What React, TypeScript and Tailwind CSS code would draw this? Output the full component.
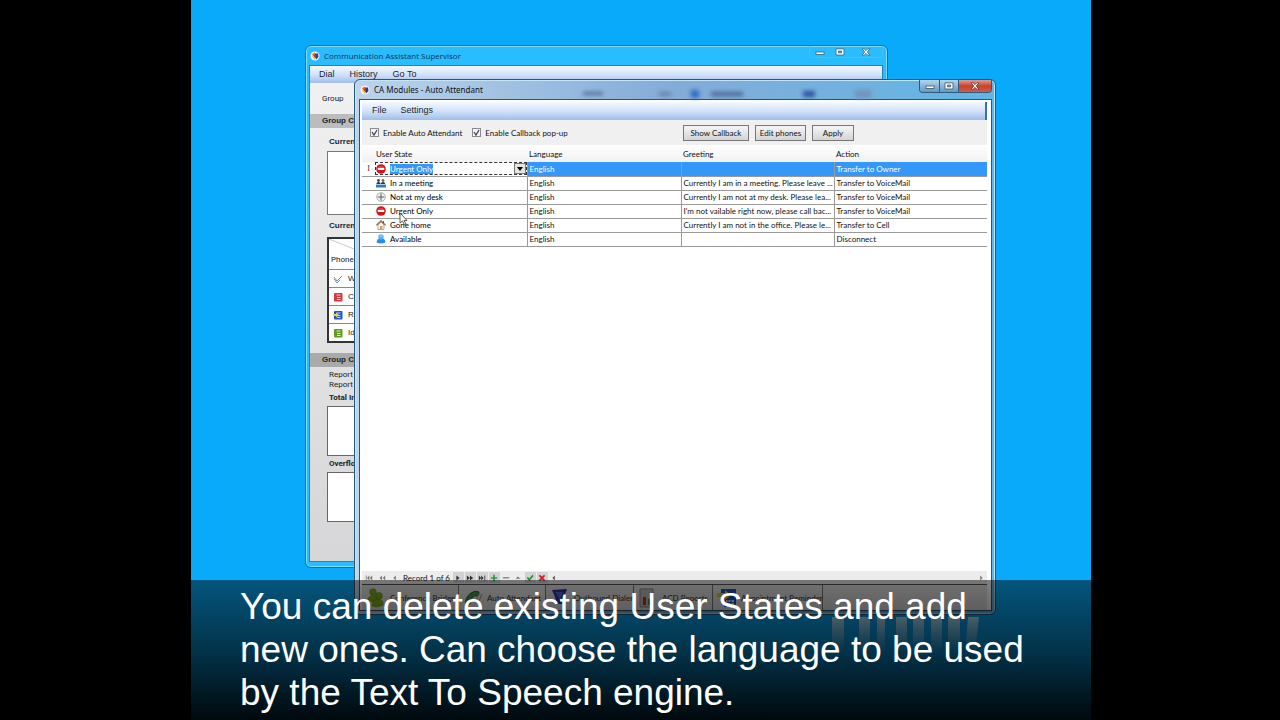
import type { ReactNode } from "react";

const menuBar = "flex items-center bg-linear-to-b from-[#f4f8fd] via-[#d3e2fb] to-[#9fbeea] font-['Liberation_Sans',sans-serif] text-[9px] text-[#1a1f33]";

const rows = [
    { icon: "stop", state: "Urgent Only", greeting: "", action: "Transfer to Owner", active: true },
    { icon: "meeting", state: "In a meeting", greeting: "Currently I am in a meeting. Please leave ...", action: "Transfer to VoiceMail" },
    { icon: "clock", state: "Not at my desk", greeting: "Currently I am not at my desk. Please lea...", action: "Transfer to VoiceMail" },
    { icon: "stop", state: "Urgent Only", greeting: "I'm not vailable right now, please call bac...", action: "Transfer to VoiceMail" },
    { icon: "home", state: "Gone home", greeting: "Currently I am not in the office. Please le...", action: "Transfer to Cell" },
    { icon: "user", state: "Available", greeting: "", action: "Disconnect" }
];

const tabs = [
    { icon: "bridge", label: "Conference Bridge", width: "w-[97px]" },
    { icon: "phone", label: "Auto Attendant", width: "w-[87px] bg-white/30" },
    { icon: "dialer", label: "Outbound Dialer", width: "w-[88px]" },
    { icon: "chart", label: "ACD Reports", width: "w-[79px]" },
    { icon: "calendar", label: "Appointment Reminder", width: "w-[110px]" }
];

const phones = [
    { icon: "check", label: "Work" },
    { icon: "red", label: "Cell" },
    { icon: "blue", label: "Reception" },
    { icon: "green", label: "Idle" }
];

function AppLogo() {
    return (
        <svg viewBox="0 0 10 10" className="size-[10px] shrink-0">
            <circle cx="5" cy="5" r="4.5" fill="#f4f4f8" />
            <path d="M2 3.5 4.5 1.5 6 4 4 6z" fill="#e8651e" />
            <path d="M5 2.5h3L8.5 6 6 8.5z" fill="#263d9c" />
            <path d="m1.5 5 4 1L5 9z" fill="#f1bd2e" />
            <path d="m3.5 4 3 .5-1 3z" fill="#b3244f" />
        </svg>
    );
}

function StateIcon({ name }: { name: string }) {
    return (
        <svg viewBox="0 0 10 10" className="size-[10px] shrink-0">
            {name === "stop" && (
                <>
                    <circle cx="5" cy="5" r="4.8" fill="#d3141b" />
                    <path d="M1.2 4.8A4 4 0 0 1 8.8 4.8z" fill="#e6474b" />
                    <rect x="1.8" y="4" width="6.4" height="2" fill="#fff" />
                </>
            )}
            {name === "meeting" && (
                <>
                    <circle cx="2.5" cy="2.5" r="1.4" fill="#4c443f" />
                    <circle cx="7" cy="2.5" r="1.4" fill="#8a6244" />
                    <path d="M.5 7V5q2-2 4 0v2zM5 7V5q2-2 4 0v2z" fill="#24384f" />
                    <rect y="6.5" width="10" height="3" fill="#3579bd" />
                    <rect y="6" width="10" height="1" fill="#a9d0ef" />
                </>
            )}
            {name === "clock" && (
                <>
                    <circle cx="5" cy="5" r="4.3" fill="#eef0ef" stroke="#a9b0ae" />
                    <path d="M5 1.5V5h3.2M5 5v3.5M1.8 5H5" fill="none" stroke="#49675f" strokeWidth="1" />
                </>
            )}
            {name === "home" && (
                <>
                    <path d="M2 5v4.5h6V5L5 2z" fill="#fbf7ed" stroke="#777" strokeWidth=".6" />
                    <path d="M.4 5.2 5 .8l4.6 4.4" fill="none" stroke="#95674c" strokeWidth="1.2" />
                    <path d="M4 6h2.4v3.5H4z" fill="#d0a44c" />
                    <path d="M7 1h1v2H7z" fill="#a44636" />
                </>
            )}
            {name === "user" && (
                <>
                    <path d="M.6 8.5q0-3.5 3-4h3q3 .5 2.8 4Q5 10.5.6 8.5z" fill="#268ceb" />
                    <circle cx="5" cy="3" r="2.7" fill="#54aef5" />
                    <path d="M3 2.2q2-2 4 0-2 1-4 0z" fill="#9bd4fb" />
                </>
            )}
        </svg>
    );
}

function PhoneIcon({ name }: { name: string }) {
    const fill = name === "red" ? "#d33a3e" : name === "green" ? "#5f9e1d" : "#1f58c4";
    return (
        <svg viewBox="0 0 10 10" className="size-[10px] shrink-0">
            {name === "check" ? (
                <path d="m1 3 3 4 5-5M1 5l3 4 3-3" fill="none" stroke="#7b8a9b" />
            ) : (
                <>
                    <rect x="1" y="1" width="8.5" height="8.5" rx="1" fill={fill} />
                    <path d="M3.5 3h4M4 5.5h3.5M4 7.5h3.5" stroke="#fff" strokeOpacity=".75" />
                    {name === "blue" && <path d="M0 4h3V2.5L6 5 3 7.5V6H0z" fill="#f0d24a" />}
                </>
            )}
        </svg>
    );
}

function TabIcon({ name }: { name: string }) {
    return (
        <svg viewBox="0 0 20 20" className="size-5 shrink-0">
            {name === "bridge" && (
                <g fill="#7fb51c" stroke="#5d8a12" strokeWidth=".6">
                    <circle cx="7" cy="4" r="3.3" />
                    <circle cx="13" cy="8" r="3.4" />
                    <path d="M2 11q2-5 8-3l1 4-6 2z" />
                    <path d="M6 18q0-7 6-7 6 1 5 6-5 3-11 1z" />
                </g>
            )}
            {name === "phone" && (
                <>
                    <path d="M3 18Q1 10 8 5q4-3 8-1l-2 4q-3-1-5 2t-2 6z" fill="#3f9b46" stroke="#24682a" />
                    <path d="m13 12 4-7M16 13l3-7" stroke="#8f9691" />
                </>
            )}
            {name === "dialer" && (
                <>
                    <path d="m2 2 15-1-3 8-2 7H7L5 9z" fill="#2634a8" />
                    <path d="m5 4 8 0-3 8z" fill="#5666d8" />
                </>
            )}
            {name === "chart" && (
                <>
                    <path d="M2 1h13v18H2z" fill="#c3c3c3" stroke="#888" />
                    <path d="M5 9h3v8H5z" fill="#c92c28" />
                    <path d="M10 11h3v6h-3z" fill="#3a8e3e" />
                </>
            )}
            {name === "calendar" && (
                <>
                    <path d="M4 1h15v18H7V8H4z" fill="#1d58bd" />
                    <path d="M9 12h8v5H9z" fill="#e5edf8" />
                    <path d="M11 12v5M14 12v5M9 14.500h8" stroke="#1d58bd" />
                    <path d="M0 5h8V2l6 5-6 5V9H0z" fill="#e6c72b" />
                </>
            )}
        </svg>
    );
}

function CaptionGlyph({ name, stroke }: { name: "min" | "max" | "close"; stroke: string }) {
    return (
        <svg viewBox="0 0 10 8" className="h-2 w-[10px]" fill="#fff" stroke={stroke} strokeWidth=".9">
            {name === "min" && <rect x="1" y="4" width="8" height="2.500" />}
            {name === "max" && <path fillRule="evenodd" d="M1 .8h8v6.200H1zM3.500 3h3v1.800h-3z" />}
            {name === "close" && <path d="M1 .8h2.200L5 2.600 6.800.8H9L6.300 4 9 7.200H6.800L5 5.400 3.200 7.200H1L3.700 4z" />}
        </svg>
    );
}

function SupervisorWindow() {
    return (
        <section className="absolute left-[114px] top-[45px] flex h-[523px] w-[583px] flex-col rounded-md border border-[#1872a6] bg-[#29bcff] pb-[5px] pl-[3px] pr-1 shadow-[inset_0_0_0_1px_#7fdcff]">
            <header className="flex h-[19px] items-center justify-between pl-[1px] text-[#0b3552]">
                <h2 className="flex items-center gap-1 font-['Open_Sans',sans-serif] text-[8px]">
                    <AppLogo />
                    Communication Assistant Supervisor
                </h2>
                <div className="flex h-3 items-center self-start rounded-b border border-t-0 border-[#4cbdf0]">
                    <button aria-label="Minimize" className="flex w-5 justify-center"><CaptionGlyph name="min" stroke="#416d86" /></button>
                    <button aria-label="Maximize" className="flex w-5 justify-center"><CaptionGlyph name="max" stroke="#416d86" /></button>
                    <button aria-label="Close" className="flex w-8 justify-center"><CaptionGlyph name="close" stroke="#416d86" /></button>
                </div>
            </header>
            <div className="flex grow flex-col border border-[#2283b4] bg-linear-to-b from-[#f2f2f2] to-[#d6d6d8]">
                <nav className={`${menuBar} h-[17px] gap-[15px] pl-[9px]`}>
                    <button>Dial</button>
                    <button>History</button>
                    <button>Go To</button>
                </nav>
                <div className="w-44 font-['Liberation_Sans',sans-serif] text-[8px] leading-[10px] text-[#222]">
                    <p className="flex h-[31px] items-center pl-3 font-['Roboto',sans-serif]">Group</p>
                    <h3 className="flex h-[14px] items-center bg-[#bcbcbc] pl-3 font-bold">Group Calls</h3>
                    <div className="pl-[17px] pt-[9px]">
                        <h4 className="pl-[2px] font-bold">Current Calls</h4>
                        <div className="mt-1 h-16 border border-[#777] bg-white" />
                        <h4 className="mt-[6px] pl-[2px] font-bold">Current Members</h4>
                        <div className="mt-[6px] border-2 border-[#333] bg-white">
                            <svg viewBox="0 0 60 11" className="block h-[11px] w-[60px]">
                                <path d="M0 0 60 24" stroke="#c8c8c8" />
                            </svg>
                            <p className="flex h-[19px] items-center pl-[2px] font-['Roboto',sans-serif]">Phone</p>
                            {phones.map((phone) => (
                                <p key={phone.label} className="flex h-[18px] items-center gap-[5px] border-t border-[#888] pl-1">
                                    <PhoneIcon name={phone.icon} />
                                    {phone.label}
                                </p>
                            ))}
                        </div>
                    </div>
                    <h3 className="mt-[10px] flex h-[14px] items-center bg-[#aaa] pl-3 font-bold">Group Calls</h3>
                    <div className="pl-[17px] pt-[3px] font-['Roboto',sans-serif]">
                        <p className="pl-[2px]">Report from</p>
                        <p className="pl-[2px]">Report to</p>
                        <h4 className="mt-[3px] pl-[2px] font-bold">Total Incoming</h4>
                        <div className="mt-[3px] h-[50px] border border-[#666] bg-white" />
                        <h4 className="mt-[3px] pl-[2px] font-bold">Overflow</h4>
                        <div className="mt-[3px] h-[50px] border border-[#666] bg-white" />
                    </div>
                </div>
            </div>
        </section>
    );
}

function ToolButton({ children, width }: { children: ReactNode; width: string }) {
    return (
        <button className={`${width} h-4 border border-[#777] bg-linear-to-b from-[#f6f6f6] to-[#d4d4d4] text-center leading-[14px]`}>
            {children}
        </button>
    );
}

function StatesTable() {
    return (
        <table className="w-full table-fixed border-collapse text-left text-[8px] leading-3">
            <colgroup>
                <col className="w-[13px]" />
                <col className="w-[152px]" />
                <col className="w-[154px]" />
                <col className="w-[153px]" />
                <col />
            </colgroup>
            <thead>
                <tr className="h-[17px] bg-linear-to-b from-white to-[#f1f1f3]">
                    <th aria-label="Row" />
                    <th className="p-0 pl-[1px] font-normal">User State</th>
                    <th className="p-0 pl-[2px] font-normal">Language</th>
                    <th className="p-0 pl-[2px] font-normal">Greeting</th>
                    <th className="p-0 pl-[2px] font-normal">Action</th>
                </tr>
            </thead>
            <tbody>
                {rows.map((row, index) => (
                    <tr key={index} className={`h-[14px] border-b border-[#9a9a9a] ${row.active ? "bg-[#3397fb] text-white" : "bg-white"}`}>
                        <td className="bg-white p-0 text-center font-['Liberation_Serif',serif] text-[#333]">{row.active && "I"}</td>
                        <td className="border-r border-[#9a9a9a] bg-white p-0 text-black">
                            {row.active ? (
                                <div className="flex h-[13px] items-center gap-1 border border-dashed border-[#333]">
                                    <StateIcon name={row.icon} />
                                    <span className="bg-[#3397fb] leading-[10px] text-white">{row.state}</span>
                                    <button aria-label="Choose user state" className="ml-auto flex h-[11px] w-3 items-center justify-center border border-[#777] bg-[#e6e6e0]">
                                        <svg viewBox="0 0 6 4" className="h-1 w-[6px]"><path d="M0 0h6L3 4z" /></svg>
                                    </button>
                                </div>
                            ) : (
                                <div className="flex h-[13px] items-center gap-1 pl-[1px]">
                                    <StateIcon name={row.icon} />
                                    {row.state}
                                </div>
                            )}
                        </td>
                        <td className="border-r border-[#9a9a9a] p-0 pl-[2px]">English</td>
                        <td className="border-r border-[#9a9a9a] p-0 pl-[2px] whitespace-nowrap">{row.greeting}</td>
                        <td className="p-0 pl-[2px]">{row.action}</td>
                    </tr>
                ))}
            </tbody>
        </table>
    );
}

const navButtons = [
    { label: "Next", d: "M3 2v6l4-3z", fill: "#333" },
    { label: "Next page", d: "M1 2v6l4-3zM5 2v6l4-3z", fill: "#333" },
    { label: "Last", d: "M1 2v6l3-3zM4 2v6l3-3zM8 2h1v6H8z", fill: "#333" },
    { label: "Add", d: "M4 1h2v3h3v2H6v3H4V6H1V4h3z", fill: "#2f9a2f" },
    { label: "Remove", d: "M1 4h8v1.500H1z", fill: "#777", flat: true },
    { label: "Edit", d: "m2 6 3-3 3 3z", fill: "#777", flat: true },
    { label: "Post", d: "m1 5 1.500-1.500L4 5.500 8 1l1.500 1.500L4 9z", fill: "#2a9130" },
    { label: "Cancel", d: "m1 2.500 1.500-1.500L5 3.500 7.500 1 9 2.500 6.500 5 9 7.500 7.500 9 5 6.500 2.500 9 1 7.500 3.500 5z", fill: "#cf1820" },
    { label: "Scroll left", d: "M6 2v6L3 5z", fill: "#555", flat: true }
];

const backButtons = [
    { label: "First", d: "M1 2h1v6H1zM5.500 2v6l-3-3zM9 2v6L6 5z" },
    { label: "Previous page", d: "M5 2v6L2 5zM9 2v6L6 5z" },
    { label: "Previous", d: "M6 2v6L3 5z" }
];

function RecordNavigator() {
    return (
        <div className="flex h-[13px] items-center bg-[#ececec] text-[8px]">
            {backButtons.map((button) => (
                <button key={button.label} aria-label={button.label} className="flex w-[13px] justify-center">
                    <svg viewBox="0 0 10 10" className="size-2"><path d={button.d} fill="#777" /></svg>
                </button>
            ))}
            <span className="w-[51px] text-center">Record 1 of 6</span>
            {navButtons.map((button) => (
                <button key={button.label} aria-label={button.label} className="flex w-3 justify-center">
                    <span className={`flex size-[11px] items-center justify-center ${button.flat ? "" : "bg-[#d2d2d6]"}`}>
                        <svg viewBox="0 0 10 10" className="size-2"><path d={button.d} fill={button.fill} /></svg>
                    </span>
                </button>
            ))}
            <button aria-label="Scroll right" className="ml-auto pr-[2px]">
                <svg viewBox="0 0 10 10" className="size-2"><path d="M4 2v6l3-3z" fill="#777" /></svg>
            </button>
        </div>
    );
}

function AttendantWindow() {
    return (
        <section className="absolute left-[163px] top-[79px] flex h-[536px] w-[642px] flex-col rounded-md border border-[#24587c] bg-linear-to-r from-[#bdd4ea] via-[#83acd8] to-[#5fb6e6] pb-[3px] pl-1 pr-[3px] font-['Lato',sans-serif] text-[#111] shadow-[inset_0_0_0_1px_#c5e5f7]">
            {/* Glass shows the blurred toolbar of the window behind */}
            <header className="flex h-[19px] items-center justify-between">
                <h1 className="flex items-center gap-1 pl-[1px] font-['Noto_Sans',sans-serif] text-[8px]">
                    <AppLogo />
                    CA Modules - Auto Attendant
                </h1>
                <div className="ml-auto mr-12 mt-2 flex items-center gap-5 blur-[2px]">
                    <span className="mr-9 h-[3px] w-5 bg-[#4d658b]" />
                    <span className="h-1 w-3 bg-[#6480ad]" />
                    <span className="-mr-2 size-2 bg-[#2f6cc0]" />
                    <span className="mr-10 h-1 w-8 bg-[#48638f]" />
                    <span className="mr-5 h-[6px] w-3 bg-[#31509d]" />
                    <span className="h-2 w-4 bg-[#7592bb]" />
                </div>
                <div className="flex h-[13px] self-start overflow-hidden rounded-b border border-t-0 border-[#335a78]">
                    <button aria-label="Minimize" className="flex w-5 items-center justify-center border-r border-[#335a78] bg-linear-to-b from-[#b5d3ea] to-[#5c9cc8]"><CaptionGlyph name="min" stroke="#4a6070" /></button>
                    <button aria-label="Maximize" className="flex w-[19px] items-center justify-center border-r border-[#335a78] bg-linear-to-b from-[#b5d3ea] to-[#5c9cc8]"><CaptionGlyph name="max" stroke="#4a6070" /></button>
                    <button aria-label="Close" className="flex w-8 items-center justify-center bg-linear-to-b from-[#e09b8c] via-[#c8402f] to-[#cf5c4a]"><CaptionGlyph name="close" stroke="#6c3a38" /></button>
                </div>
            </header>
            <div className="flex grow flex-col border border-[#2c5674] bg-white pl-[2px] pr-1 pt-[2px]">
                <nav className={`${menuBar} h-[18px] gap-[14px] border-r-2 border-[#2f76b0] pl-[10px]`}>
                    <button>File</button>
                    <button>Settings</button>
                </nav>
                <div className="flex h-[25px] items-center bg-[#f0f0f0] text-[8px]">
                    <div className="flex w-[321px] items-center gap-[10px] pl-2">
                        {["Enable Auto Attendant", "Enable Callback pop-up"].map((label) => (
                            <label key={label} className="flex items-center gap-1">
                                <span className="grid place-items-center">
                                    <input type="checkbox" defaultChecked className="peer col-start-1 row-start-1 size-[9px] appearance-none border border-[#8b8b8b] bg-[#f4f4f4]" />
                                    <svg viewBox="0 0 9 9" className="pointer-events-none col-start-1 row-start-1 hidden size-[9px] peer-checked:block">
                                        <path d="m2 4 2 3 3-5" fill="none" stroke="#3b4267" strokeWidth="1.300" />
                                    </svg>
                                </span>
                                {label}
                            </label>
                        ))}
                    </div>
                    <div className="flex gap-[6px]">
                        <ToolButton width="w-[66px]">Show Callback</ToolButton>
                        <ToolButton width="w-[51px]">Edit phones</ToolButton>
                        <ToolButton width="w-[42px]">Apply</ToolButton>
                    </div>
                </div>
                <StatesTable />
                <div className="grow" />
                <RecordNavigator />
                <div className="flex h-[26px] items-center border-t border-[#555] bg-[#e4e4e4] text-[8px] text-[#333]">
                    {tabs.map((tab) => (
                        <button key={tab.label} className={`${tab.width} flex h-full shrink-0 items-center gap-1 border-r border-[#777] pl-1 whitespace-nowrap`}>
                            <TabIcon name={tab.icon} />
                            {tab.label}
                        </button>
                    ))}
                </div>
            </div>
        </section>
    );
}

export default function App() {
    return (
        <div className="flex min-h-screen justify-center bg-black pl-[2px]">
            <main className="relative min-h-screen w-full max-w-[900px] overflow-hidden bg-[#08aaf9]">
                <svg viewBox="0 0 150 36" className="absolute left-[640px] top-[617px] h-9 w-[150px]">
                    <defs>
                        <linearGradient id="fade" x1="0" y1="0" x2="0" y2="1">
                            <stop offset="0" stopColor="#fff" stopOpacity=".75" />
                            <stop offset="1" stopColor="#fff" stopOpacity="0" />
                        </linearGradient>
                    </defs>
                    <path d="M1 0h12v36H1zM28 0h11v36H28zM46 0h8v36h-8zM65 0h11v36H65zM82 0h11v36H82zM100 0h11v36h-11zM117 0h12v36h-12zM137 0h11l-4 36h-10z" fill="url(#fade)" />
                </svg>
                <SupervisorWindow />
                <AttendantWindow />
                <svg viewBox="0 0 10 14" className="absolute left-[208px] top-[212px] h-[14px] w-[10px]">
                    <path d="M1 1v10l2.500-2 2 4 1.500-1-2-3.500H8z" fill="#fff" stroke="#333" strokeWidth=".8" />
                </svg>
                <div className="absolute inset-x-0 bottom-0 h-[140px] bg-linear-to-b from-black/50 via-black/70 to-black/95 pl-[49px] pr-10 pt-[5px]">
                    <p className="font-['Liberation_Sans',sans-serif] text-[37px] leading-[43px] text-white">
                        You can delete existing User States and add <br />
                        new ones. Can choose the language to be used <br />
                        by the Text To Speech engine.
                    </p>
                </div>
            </main>
        </div>
    );
}
